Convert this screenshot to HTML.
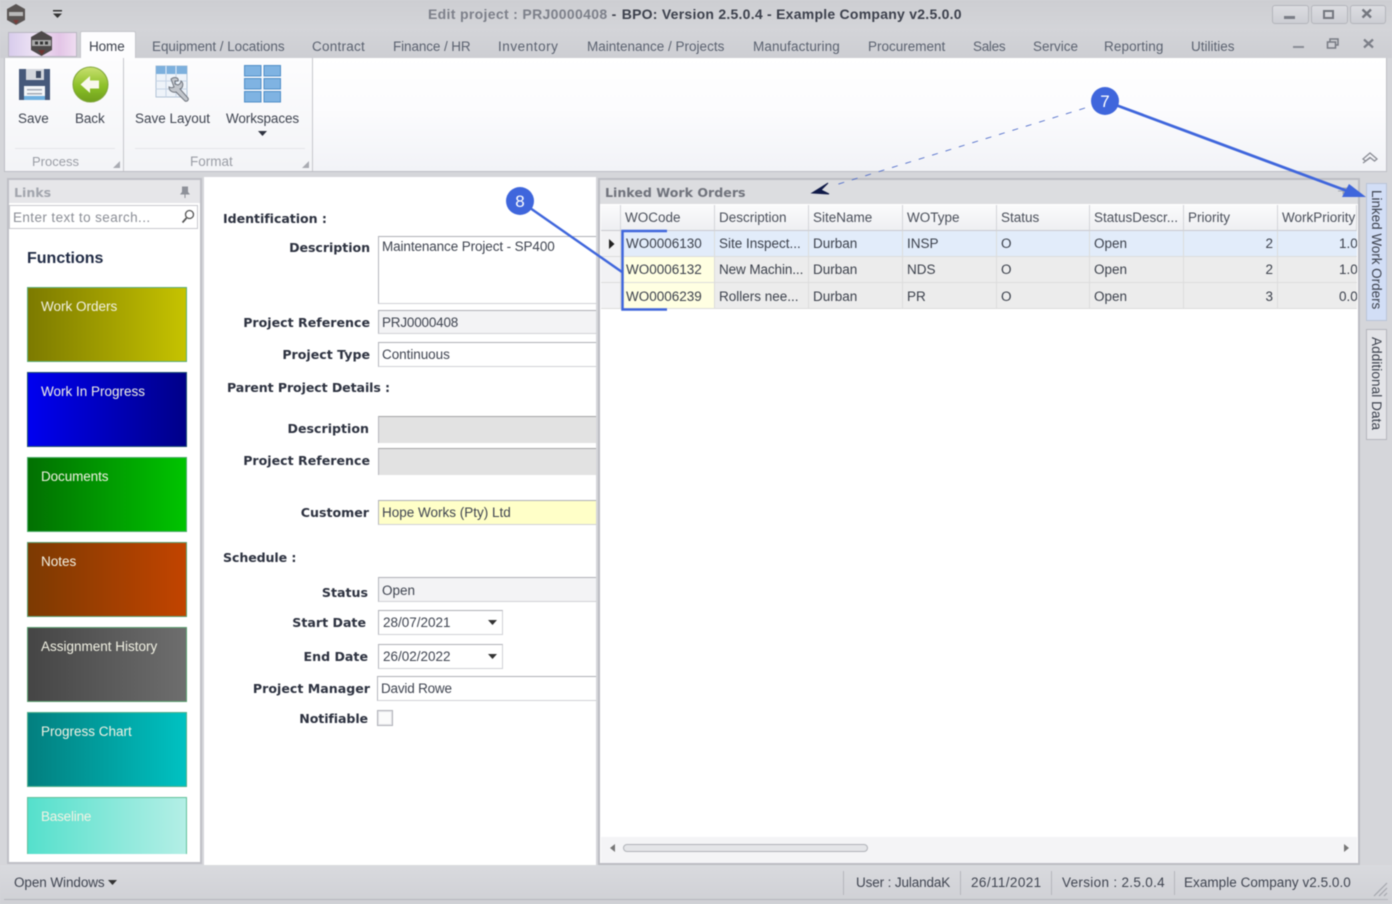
<!DOCTYPE html>
<html><head><meta charset="utf-8"><title>Edit project</title>
<style>
html,body{margin:0;padding:0;background:#d5d6da}
#r{position:relative;width:1392px;height:904px;overflow:hidden;background:#d5d6da;font:13.5px/16px "Liberation Sans",sans-serif;color:#3f4450;filter:blur(.4px)}
#r div,#r span.t,#r svg{position:absolute}
.t{position:absolute;white-space:nowrap}
.b{font:bold 12.6px/16px "DejaVu Sans",sans-serif;color:#2d3240}
.lr{text-align:right}
.tab{color:#5b6270;top:39px}
.fn{left:27px;width:158px;height:73px;border:1px solid #5aae7a;color:#f2f2e4;box-sizing:content-box}
.fn span{position:absolute;left:13px;top:11px;white-space:nowrap}
.in{left:378px;width:218px;box-sizing:border-box;border:1px solid #d0d1d6;border-top:1px solid #aeb0b6;border-left:1px solid #b4b6bc;border-right:0;background:#fff}
.cell{box-sizing:border-box;height:26px;border-right:1px solid #dcdcdc;border-bottom:1px solid #dcdcdc;padding:5px 0 0 4px;white-space:nowrap;overflow:hidden;color:#3c414c}
.r3{padding-top:6px}
.c1{padding-left:5px}
.hd{background:linear-gradient(#fbfbfc,#eeeff2);height:26px;top:205px;box-sizing:border-box;border-right:1px solid #d4d5d9;border-bottom:1px solid #c9cad0;padding:5px 0 0 4px;white-space:nowrap;overflow:hidden;color:#4a4f5a}
</style></head>
<body><div id="r">
<!-- title bar -->
<div style="left:0;top:0;width:1392px;height:30px;background:linear-gradient(#cdced2,#d4d5d9)"></div>
<div style="left:0;top:30px;width:1392px;height:28px;background:linear-gradient(#d3d4d8,#cdced3)"></div>
<span class="t" style="left:428px;top:6px;font-weight:bold;font-size:14px;color:#7d808a;letter-spacing:.33px">Edit project : PRJ0000408 <span style="color:#3c404c;letter-spacing:.25px">- <span style="padding-left:1px">BPO: Version 2.5.0.4 - Example Company v2.5.0.0</span></span></span>
<svg style="left:5px;top:3px" width="22" height="23" viewBox="0 0 22 23"><path d="M11 1 L20 6 V17 L11 22 L2 17 V6Z" fill="#5a5554"/><rect x="4" y="9" width="14" height="4" fill="#b9b9b9"/><path d="M8 17h6l-3 4z" fill="#7a3b38"/></svg>
<svg style="left:53px;top:10px" width="10" height="10"><rect x="0" y="0" width="9" height="1.500" fill="#333"/><path d="M0 3.500h9l-4.500 4.500z" fill="#333"/></svg>
<!-- window buttons -->
<div style="left:1272px;top:5px;width:35px;height:17px;border:1px solid #b3b5bb;border-radius:3px;background:linear-gradient(#dcdde1,#cdced4)"></div>
<div style="left:1311px;top:5px;width:35px;height:17px;border:1px solid #b3b5bb;border-radius:3px;background:linear-gradient(#dcdde1,#cdced4)"></div>
<div style="left:1350px;top:5px;width:34px;height:17px;border:1px solid #b3b5bb;border-radius:3px;background:linear-gradient(#dcdde1,#cdced4)"></div>
<div style="left:1284px;top:16px;width:11px;height:2.500px;background:#7a7d86"></div>
<div style="left:1323px;top:10px;width:7px;height:5px;border:2px solid #74777f"></div>
<svg style="left:1361px;top:8px" width="12" height="11"><path d="M1.500 1.500L10 9.500M10 1.500L1.500 9.500" stroke="#74777f" stroke-width="2.400"/></svg>
<!-- app button -->
<div style="left:8px;top:32px;width:67px;height:23px;border:1px solid #b9b7c2;background:linear-gradient(90deg,#d8ccec,#efe4f5 40%,#e3c5e6 75%,#efdcf1)"></div>
<svg style="left:29px;top:30px" width="25" height="27" viewBox="0 0 25 27"><path d="M12.500 1 L23 7 V20 L12.500 26 L2 20 V7Z" fill="#4e4a4a"/><rect x="3" y="10" width="19" height="6" fill="#a9a9a9"/><rect x="6" y="11.500" width="3" height="3" fill="#333"/><rect x="11" y="11.500" width="3" height="3" fill="#333"/><rect x="16" y="11.500" width="3" height="3" fill="#333"/><path d="M9 20h7l-3 5z" fill="#6e3330"/></svg>
<!-- Home tab -->
<div style="left:80px;top:31px;width:56px;height:28px;background:#fdfdfe;border:1px solid #c4c5ca;border-bottom:0;border-radius:2px 2px 0 0;box-sizing:border-box"></div>
<span class="t" style="left:89px;top:39px;color:#3a3f4a;letter-spacing:-.1px">Home</span>
<span class="t tab" style="left:152px;letter-spacing:-.05px">Equipment / Locations</span>
<span class="t tab" style="left:312px;letter-spacing:.25px">Contract</span>
<span class="t tab" style="left:393px;letter-spacing:-.1px">Finance / HR</span>
<span class="t tab" style="left:498px;letter-spacing:.55px">Inventory</span>
<span class="t tab" style="left:587px">Maintenance / Projects</span>
<span class="t tab" style="left:753px;letter-spacing:.1px">Manufacturing</span>
<span class="t tab" style="left:868px">Procurement</span>
<span class="t tab" style="left:973px;letter-spacing:-.3px">Sales</span>
<span class="t tab" style="left:1033px">Service</span>
<span class="t tab" style="left:1104px;letter-spacing:.1px">Reporting</span>
<span class="t tab" style="left:1191px">Utilities</span>
<div style="left:1293px;top:46px;width:11px;height:2px;background:#8a8d96"></div>
<svg style="left:1326px;top:38px" width="14" height="12"><rect x="4" y="1" width="8" height="6" fill="none" stroke="#777a83" stroke-width="1.500"/><rect x="1.500" y="4" width="8" height="6" fill="#cfd0d5" stroke="#777a83" stroke-width="1.500"/></svg>
<svg style="left:1362px;top:38px" width="13" height="11"><path d="M2 1.500L11 9.500M11 1.500L2 9.500" stroke="#7c7f88" stroke-width="2.200"/></svg>
<!-- ribbon -->
<div style="left:4px;top:58px;width:1383px;height:114px;box-sizing:border-box;border:1px solid #bdbec4;border-top:0;background:linear-gradient(#ffffff,#fcfcfe 45%,#f2f3f7)"></div>
<div style="left:5px;top:58px;width:308px;height:113px;background:linear-gradient(#fdfdfe,#f3f4f7)"></div>
<div style="left:123px;top:58px;width:1px;height:113px;background:#c6c7cc"></div>
<div style="left:312px;top:58px;width:1px;height:113px;background:#c6c7cc"></div>
<div style="left:15px;top:148px;width:100px;height:1px;background:#e4e5e9"></div>
<div style="left:135px;top:148px;width:170px;height:1px;background:#e4e5e9"></div>
<!-- Save icon -->
<svg style="left:17px;top:67px" width="35" height="35" viewBox="0 0 35 35"><path d="M2 2H33V33H2Z" fill="#46597a"/><rect x="9" y="2" width="18" height="11" fill="#d3d7dd"/><rect x="19" y="4" width="5" height="7" fill="#3d4a63"/><rect x="7" y="19" width="21" height="14" fill="#f4f6f9"/><rect x="10" y="22" width="15" height="1.500" fill="#a3aab5"/><rect x="10" y="26" width="15" height="1.500" fill="#a3aab5"/><rect x="7" y="29" width="21" height="4" fill="#6fb0e0"/></svg>
<!-- Back icon -->
<svg style="left:72px;top:66px" width="37" height="37" viewBox="0 0 37 37"><defs><linearGradient id="g" x1="0" y1="0" x2="0" y2="1"><stop offset="0" stop-color="#c9e070"/><stop offset=".55" stop-color="#8cc028"/><stop offset="1" stop-color="#6fa01c"/></linearGradient></defs><circle cx="18.500" cy="18.500" r="17.500" fill="url(#g)" stroke="#7fa53a"/><path d="M8.500 18.500 L18 10 V14.500 H27 V22.500 H18 V27Z" fill="#f8f8ec"/></svg>
<!-- Save Layout icon -->
<svg style="left:155px;top:65px" width="37" height="38" viewBox="0 0 37 38"><rect x="1" y="1" width="31" height="31" fill="#eef3f9" stroke="#b2c3d6"/><rect x="1" y="1" width="31" height="8" fill="#7db0dd"/><path d="M11 1V32M21 1V32M1 16H32M1 24H32" stroke="#c6d5e6"/><path d="M11 1V9M21 1V9" stroke="#e7f0f9"/><path d="M16 14c4-3 8-1 7 2l-3 0 0 3 3 1c2-1 3-2 3-4 3 2 2 7-1 8l8 9c1 2-1 4-3 3l-9-9c-3 1-7-1-7-5 2 1 3 1 5 0z" fill="#c2c6cc" stroke="#6f747d"/></svg>
<!-- Workspaces icon -->
<svg style="left:244px;top:65px" width="37" height="38" viewBox="0 0 37 38"><g fill="#7fb3e2" stroke="#4f8ec8"><rect x=".5" y=".5" width="16.500" height="10.500"/><rect x="20" y=".5" width="16.500" height="10.500"/><rect x=".5" y="13.500" width="16.500" height="10.500"/><rect x="20" y="13.500" width="16.500" height="10.500"/><rect x=".5" y="26.500" width="16.500" height="10.500"/><rect x="20" y="26.500" width="16.500" height="10.500"/></g></svg>
<span class="t" style="left:18px;top:111px">Save</span>
<span class="t" style="left:75px;top:111px;letter-spacing:-.1px">Back</span>
<span class="t" style="left:135px;top:111px">Save Layout</span>
<span class="t" style="left:226px;top:111px;letter-spacing:-.1px">Workspaces</span>
<svg style="left:258px;top:131px" width="9" height="6"><path d="M0 0h9L4.500 5z" fill="#2f3340"/></svg>
<span class="t" style="left:32px;top:154px;color:#9a9da5;font-size:13px">Process</span>
<span class="t" style="left:190px;top:154px;color:#9a9da5">Format</span>
<svg style="left:113px;top:161px" width="7" height="7"><path d="M7 0V7H0Z" fill="#a9abb2"/></svg>
<svg style="left:302px;top:161px" width="7" height="7"><path d="M7 0V7H0Z" fill="#a9abb2"/></svg>
<svg style="left:1361px;top:151px" width="18" height="15"><path d="M2 8L9 2L16 8L13.500 10L9 6.500L4.500 10Z M2 12L9 7" fill="none" stroke="#8b8d95" stroke-width="1.300"/></svg>

<!-- links panel -->
<div style="left:7px;top:178px;width:195px;height:686px;box-sizing:border-box;border:2px solid #bfc0c6;background:#fff"></div>
<div style="left:9px;top:180px;width:191px;height:23px;background:#e6e6e9"></div>
<span class="t b" style="left:14px;top:185px;color:#a2a5ad;font-size:12.6px">Links</span>
<svg style="left:180px;top:186px" width="10" height="12"><path d="M2.500 1h5v5l1.500 2h-8l1.500-2z M5 8v4" fill="#8e9199" stroke="#8e9199"/></svg>
<div style="left:9px;top:205px;width:189px;height:24px;box-sizing:border-box;border:1px solid #c8c9ce;background:#fff"></div>
<span class="t" style="left:13px;top:210px;color:#8b8e96;letter-spacing:.4px">Enter text to search...</span>
<svg style="left:181px;top:209px" width="14" height="15"><circle cx="8.500" cy="5.500" r="4" fill="none" stroke="#555" stroke-width="1.300"/><path d="M5.500 9L1.500 13.500" stroke="#555" stroke-width="1.700"/></svg>
<span class="t" style="left:27px;top:251px;font-weight:bold;font-size:16px;color:#1f2a44">Functions</span>
<div class="fn" style="top:287px;background:linear-gradient(90deg,#7c7a00,#c6c300)"><span>Work Orders</span></div>
<div class="fn" style="top:372px;background:linear-gradient(90deg,#0000f0,#000088);border-color:#1c4f70"><span>Work In Progress</span></div>
<div class="fn" style="top:457px;background:linear-gradient(90deg,#027002,#00c400);border-color:#4bae6a"><span style="letter-spacing:-.1px">Documents</span></div>
<div class="fn" style="top:542px;background:linear-gradient(90deg,#7c3a02,#c24400);border-color:#5aa070"><span>Notes</span></div>
<div class="fn" style="top:627px;background:linear-gradient(90deg,#454545,#6e6e6e);border-color:#5aa070"><span>Assignment History</span></div>
<div class="fn" style="top:712px;background:linear-gradient(90deg,#037f7f,#00c2c2);border-color:#4fb08a"><span>Progress Chart</span></div>
<div class="fn" style="top:797px;height:56px;border-bottom:0;background:linear-gradient(90deg,#55e0cc,#b4efe6);border-color:#63c09a"><span style="letter-spacing:-.2px">Baseline</span></div>

<!-- form -->
<div style="left:204px;top:177px;width:392px;height:688px;background:#fff"></div>
<span class="t b" style="left:223px;top:211px;letter-spacing:-.05px">Identification :</span>
<span class="t b lr" style="right:1022px;top:240px;letter-spacing:-.05px">Description</span>
<div class="in" style="top:236px;height:68px"></div><span class="t" style="left:382px;top:239px;letter-spacing:-.11px">Maintenance Project - SP400</span>
<span class="t b lr" style="right:1022px;top:315px">Project Reference</span>
<div class="in" style="top:310px;height:24px;background:#f3f3f5"></div><span class="t" style="left:382px;top:315px;letter-spacing:-.2px">PRJ0000408</span>
<span class="t b lr" style="right:1022px;top:347px">Project Type</span>
<div class="in" style="top:342px;height:25px"></div><span class="t" style="left:382px;top:347px;letter-spacing:-.05px">Continuous</span>
<span class="t b" style="left:227px;top:380px;letter-spacing:-.1px">Parent Project Details :</span>
<span class="t b lr" style="right:1023px;top:421px">Description</span>
<div class="in" style="top:416px;height:27px;background:#e2e2e2;border-top:1px solid #a3a3a6;border-bottom:0"></div>
<span class="t b lr" style="right:1022px;top:453px">Project Reference</span>
<div class="in" style="top:448px;height:27px;background:#e2e2e2;border-top:1px solid #a3a3a6;border-bottom:0"></div>
<span class="t b lr" style="right:1023px;top:505px">Customer</span>
<div class="in" style="top:500px;height:25px;background:#ffffc8"></div><span class="t" style="left:382px;top:505px">Hope Works (Pty) Ltd</span>
<span class="t b" style="left:223px;top:550px;letter-spacing:-.1px">Schedule :</span>
<span class="t b lr" style="right:1024px;top:585px">Status</span>
<div class="in" style="top:577px;height:25px;background:#f3f3f5"></div><span class="t" style="left:382px;top:583px">Open</span>
<span class="t b lr" style="right:1026px;top:615px">Start Date</span>
<div class="in" style="top:610px;width:125px;height:25px;border-right:1px solid #d0d1d6"></div><span class="t" style="left:383px;top:615px">28/07/2021</span>
<svg style="left:488px;top:620px" width="9" height="5"><path d="M0 0h9L4.500 5z" fill="#333"/></svg>
<span class="t b lr" style="right:1024px;top:649px">End Date</span>
<div class="in" style="top:644px;width:125px;height:25px;border-right:1px solid #d0d1d6"></div><span class="t" style="left:383px;top:649px">26/02/2022</span>
<svg style="left:488px;top:654px" width="9" height="5"><path d="M0 0h9L4.500 5z" fill="#333"/></svg>
<span class="t b lr" style="right:1022px;top:681px">Project Manager</span>
<div class="in" style="left:377px;width:219px;top:676px;height:25px"></div><span class="t" style="left:381px;top:681px;letter-spacing:-.2px">David Rowe</span>
<span class="t b lr" style="right:1024px;top:711px;letter-spacing:-.1px">Notifiable</span>
<div style="left:377px;top:710px;width:16px;height:16px;box-sizing:border-box;border:1px solid #b0b2b8;background:#fbfbfb;box-shadow:inset 0 0 0 1px #e4e5e9"></div>

<!-- grid panel -->
<div style="left:598px;top:178px;width:762px;height:687px;box-sizing:border-box;border:2px solid #bcbdc3;background:#fff"></div>
<div style="left:600px;top:180px;width:758px;height:24px;background:#dcdde0"></div>
<span class="t b" style="left:605px;top:185px;color:#70737c;font-size:12.6px">Linked Work Orders</span>
<svg style="left:1338px;top:187px" width="12" height="10"><path d="M0 4h5M5 1h6v6H5z" fill="#a6a8ae" stroke="#a6a8ae"/></svg>
<div class="hd" style="left:601px;width:20px"></div>
<div class="hd c1" style="left:621px;width:94px">WOCode</div>
<div class="hd" style="left:715px;width:94px">Description</div>
<div class="hd" style="left:809px;width:94px">SiteName</div>
<div class="hd" style="left:903px;width:94px">WOType</div>
<div class="hd" style="left:997px;width:93px">Status</div>
<div class="hd" style="left:1090px;width:94px">StatusDescr...</div>
<div class="hd" style="left:1184px;width:94px">Priority</div>
<div class="hd" style="left:1278px;width:79px">WorkPriority</div>

<!-- rows -->
<div style="left:601px;top:231px;width:756px;height:26px;background:#e2ecfa"></div>
<div style="left:601px;top:257px;width:756px;height:52px;background:#ececec"></div>
<div style="left:621px;top:257px;width:94px;height:52px;background:#ffffe2"></div>
<div style="left:601px;top:231px;width:20px;height:78px;background:#f2f2f4"></div>
<svg style="left:609px;top:239px" width="6" height="10"><path d="M0 0L5.500 5L0 10Z" fill="#222"/></svg>
<div class="cell" style="left:601px;top:231px;width:20px"></div><div class="cell" style="left:601px;top:257px;width:20px"></div><div class="cell" style="left:601px;top:283px;width:20px"></div>

<div class="cell c1" style="left:621px;top:231px;width:94px">WO0006130</div><div class="cell" style="left:715px;top:231px;width:94px">Site Inspect...</div><div class="cell" style="left:809px;top:231px;width:94px">Durban</div><div class="cell" style="left:903px;top:231px;width:94px">INSP</div><div class="cell" style="left:997px;top:231px;width:93px">O</div><div class="cell" style="left:1090px;top:231px;width:94px">Open</div><div class="cell" style="left:1184px;top:231px;width:94px;text-align:right;padding-right:4px">2</div><div class="cell" style="left:1278px;top:231px;width:79px;border-right:0;padding-left:61px">1.0</div>

<div class="cell c1" style="left:621px;top:257px;width:94px">WO0006132</div><div class="cell" style="left:715px;top:257px;width:94px;letter-spacing:-.1px">New Machin...</div><div class="cell" style="left:809px;top:257px;width:94px">Durban</div><div class="cell" style="left:903px;top:257px;width:94px">NDS</div><div class="cell" style="left:997px;top:257px;width:93px">O</div><div class="cell" style="left:1090px;top:257px;width:94px">Open</div><div class="cell" style="left:1184px;top:257px;width:94px;text-align:right;padding-right:4px">2</div><div class="cell" style="left:1278px;top:257px;width:79px;border-right:0;padding-left:61px">1.0</div>

<div class="cell c1 r3" style="left:621px;top:283px;width:94px">WO0006239</div><div class="cell r3" style="left:715px;top:283px;width:94px">Rollers nee...</div><div class="cell r3" style="left:809px;top:283px;width:94px">Durban</div><div class="cell r3" style="left:903px;top:283px;width:94px">PR</div><div class="cell r3" style="left:997px;top:283px;width:93px">O</div><div class="cell r3" style="left:1090px;top:283px;width:94px">Open</div><div class="cell r3" style="left:1184px;top:283px;width:94px;text-align:right;padding-right:4px">3</div><div class="cell r3" style="left:1278px;top:283px;width:79px;border-right:0;padding-left:61px">0.0</div>

<!-- scrollbar -->
<div style="left:601px;top:837px;width:756px;height:26px;background:#f4f4f6"></div>
<svg style="left:610px;top:844px" width="5" height="8"><path d="M5 0L0 4L5 8Z" fill="#777"/></svg>
<svg style="left:1344px;top:844px" width="5" height="8"><path d="M0 0L5 4L0 8Z" fill="#777"/></svg>
<div style="left:623px;top:844px;width:245px;height:8px;box-sizing:border-box;border:1px solid #b0b2b8;border-radius:4px;background:#e4e5e8"></div>

<!-- side tabs -->
<div style="left:1366px;top:183px;width:21px;height:138px;box-sizing:border-box;border:1px solid #b9c4d6;background:#d2def6"></div>
<div style="left:1366px;top:329px;width:21px;height:111px;box-sizing:border-box;border:1px solid #b5b6bc;background:#e3e4e8"></div>
<span class="t" style="left:1368px;top:190px;writing-mode:vertical-rl;line-height:16px;color:#3b404c;letter-spacing:-.03px">Linked Work Orders</span>
<span class="t" style="left:1368px;top:337px;writing-mode:vertical-rl;line-height:16px;color:#3b404c;letter-spacing:.1px">Additional Data</span>

<!-- status bar -->
<div style="left:0;top:865px;width:1392px;height:39px;background:linear-gradient(#d9dade,#cfd0d5)"></div>
<div style="left:4px;top:899px;width:1384px;height:1px;background:#b5b6bc"></div>
<span class="t" style="left:14px;top:875px;letter-spacing:-.08px">Open Windows</span>
<svg style="left:108px;top:880px" width="9" height="5"><path d="M0 0h9L4.500 5z" fill="#333"/></svg>
<div style="left:843px;top:871px;width:1px;height:24px;background:#b5b6bc"></div>
<div style="left:960px;top:871px;width:1px;height:24px;background:#b5b6bc"></div>
<div style="left:1051px;top:871px;width:1px;height:24px;background:#b5b6bc"></div>
<div style="left:1174px;top:871px;width:1px;height:24px;background:#b5b6bc"></div>
<span class="t" style="left:856px;top:875px;letter-spacing:-.13px">User : JulandaK</span>
<span class="t" style="left:971px;top:875px;letter-spacing:.4px">26/11/2021</span>
<span class="t" style="left:1062px;top:875px;letter-spacing:.32px">Version : 2.5.0.4</span>
<span class="t" style="left:1184px;top:875px;letter-spacing:.04px">Example Company v2.5.0.0</span>
<svg style="left:1372px;top:881px" width="16" height="16"><path d="M2 15L15 2M7 15L15 7M12 15L15 12" stroke="#a4a6ad" stroke-width="1.200"/></svg>

<!-- annotations -->
<svg style="left:0;top:0;z-index:5" width="1392" height="904">
<path d="M1085 108L832 186" stroke="#4a68c8" stroke-width=".9" stroke-dasharray="6 8" fill="none"/>
<path d="M812 193L828 183L821 190L829 194Z" fill="#101a48" stroke="#101a48"/>
<path d="M1105 101L1350 192" stroke="#3f66dc" stroke-width="2.800" fill="none"/>
<path d="M1366 197L1342 197L1349 184Z" fill="#3f66dc"/>
<path d="M520 201L622 272" stroke="#3f66dc" stroke-width="2.400" fill="none"/>
<path d="M667 231H622.500V309.500H667" stroke="#3f66dc" stroke-width="2.500" fill="none"/>
<circle cx="1105" cy="101" r="14" fill="#3f66dc"/>
<circle cx="520" cy="201" r="14" fill="#3f66dc"/>
<text x="1105" y="107" text-anchor="middle" fill="#fff" font-family="Liberation Sans,sans-serif" font-size="17">7</text>
<text x="520" y="207" text-anchor="middle" fill="#fff" font-family="Liberation Sans,sans-serif" font-size="17">8</text>
</svg>
</div></body></html>
